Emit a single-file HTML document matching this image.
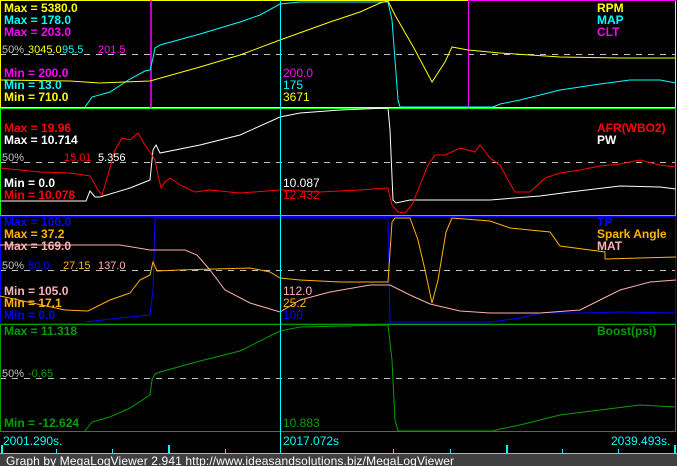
<!DOCTYPE html>
<html><head><meta charset="utf-8"><style>
html,body{margin:0;padding:0;background:#000;width:677px;height:466px;overflow:hidden}
svg{display:block}
text{font-family:"Liberation Sans",sans-serif;font-size:12px}
.b{font-weight:bold}
.s{font-size:11px}
</style></head><body>
<svg width="677" height="466" viewBox="0 0 677 466" xmlns="http://www.w3.org/2000/svg">
<rect width="677" height="466" fill="#000"/>
<g stroke="#c0c0c0" stroke-width="1" stroke-dasharray="6,6">
<line x1="0" y1="54.5" x2="676" y2="54.5"/>
<line x1="0" y1="162.5" x2="676" y2="162.5"/>
<line x1="0" y1="270.5" x2="676" y2="270.5"/>
<line x1="0" y1="378.5" x2="676" y2="378.5"/>
</g>
<rect x="0.5" y="0.5" width="675" height="107" fill="none" stroke="#ffff00"/>
<line x1="468" y1="0.5" x2="676" y2="0.5" stroke="#ff00ff"/>
<line x1="151" y1="0" x2="151" y2="108" stroke="#ff00ff" stroke-width="1.5"/>
<line x1="468.5" y1="0" x2="468.5" y2="108" stroke="#ff00ff"/>
<rect x="0.5" y="108.5" width="675" height="107" fill="none" stroke="#00ff00"/>
<rect x="0.5" y="216.5" width="675" height="107" fill="none" stroke="#0000ff"/>
<rect x="0.5" y="324.5" width="675" height="107" fill="none" stroke="#00a000"/>

<polyline fill="none" stroke="#00ffff" points="85,107 92,97 110,92 130,79 145,71 150,70 153,58 155,48 160,45 200,34 240,22 260,15 280,4 300,2 388,2 392,20 395,60 398,100 400,107 493,107 500,104 520,100 560,90 600,84 630,80 660,80 676,83"/>
<polyline fill="none" stroke="#ffff00" points="0,80 70,81 100,83 150,81 200,67 240,55 280,40 330,22 360,12 380,3 388,1 395,15 415,50 432,82 445,62 452,47 468,50 500,53 560,57 620,58 676,58"/>

<polyline fill="none" stroke="#ffffff" points="0,201 86,201 90,191 95,197 100,197 130,188 150,180 153,150 156,145 160,153 200,145 240,135 280,117 300,113 340,110 388,108 390,130 393,200 396,203 410,200 490,200 540,196 570,192 620,186 660,187 676,189"/>
<polyline fill="none" stroke="#ff0000" points="0,168 20,170 40,172 70,173 90,176 98,190 102,195 108,175 115,150 122,138 130,140 138,133 145,145 150,152 155,160 158,175 161,188 165,182 170,178 180,185 195,192 210,190 240,193 280,190 320,192 360,190 388,188 392,205 398,212 405,213 412,205 420,185 428,165 435,155 445,155 460,148 475,152 480,145 490,158 500,165 508,180 515,192 530,192 545,178 560,173 580,170 600,166 620,164 640,160 660,165 676,167"/>

<polyline fill="none" stroke="#0000ff" points="85,322 120,318 150,315 153,290 155,218 388,218 390,322 490,322 520,318 540,313 580,313 620,312 676,313"/>
<polyline fill="none" stroke="#ffb400" points="0,296 65,310 88,311 110,300 130,293 140,280 150,275 153,262 157,271 180,270 250,268 270,272 280,278 300,280 340,282 388,282 392,222 395,218 410,218 418,240 425,270 432,303 438,280 446,232 452,218 490,221 510,228 550,232 560,246 605,252 605,259 676,257"/>
<polyline fill="none" stroke="#ffb0b0" points="0,245 120,245 150,250 185,250 197,255 210,270 225,290 250,303 280,312 300,300 330,292 370,285 390,285 410,295 430,304 460,311 490,313 540,313 580,310 620,290 650,282 676,280"/>

<polyline fill="none" stroke="#00a000" points="85,431 92,422 110,417 130,408 150,395 152,380 155,374 160,372 200,361 240,351 280,331 300,327 388,325 392,360 395,420 398,431 493,431 500,429 520,425 560,415 600,410 640,405 676,407"/>

<line x1="280.5" y1="0" x2="280.5" y2="453" stroke="#00ffff"/>

<text class="b" x="4" y="12" fill="#ffff00">Max = 5380.0</text>
<text class="b" x="4" y="24" fill="#00ffff">Max = 178.0</text>
<text class="b" x="4" y="36" fill="#ff00ff">Max = 203.0</text>
<text class="s" x="2" y="53" fill="#c0c0c0">50%</text>
<text class="s" x="28" y="53" fill="#ffff00">3045.0</text>
<text class="s" x="62" y="53" fill="#00ffff">95.5</text>
<text class="s" x="98" y="53" fill="#ff00ff">201.5</text>
<text class="b" x="4" y="77" fill="#ff00ff">Min = 200.0</text>
<text class="b" x="4" y="89" fill="#00ffff">Min = 13.0</text>
<text class="b" x="4" y="101" fill="#ffff00">Min = 710.0</text>
<text x="283" y="77" fill="#ff00ff">200.0</text>
<text x="283" y="89" fill="#00ffff">175</text>
<text x="283" y="101" fill="#ffff00">3671</text>
<text class="b" x="597" y="12" fill="#ffff00">RPM</text>
<text class="b" x="597" y="24" fill="#00ffff">MAP</text>
<text class="b" x="597" y="36" fill="#ff00ff">CLT</text>

<text class="b" x="4" y="132" fill="#ff0000">Max = 19.96</text>
<text class="b" x="4" y="144" fill="#ffffff">Max = 10.714</text>
<text class="s" x="2" y="161" fill="#c0c0c0">50%</text>
<text class="s" x="64" y="161" fill="#ff0000">15.01</text>
<text class="s" x="98" y="161" fill="#ffffff">5.356</text>
<text class="b" x="4" y="187" fill="#ffffff">Min = 0.0</text>
<text class="b" x="4" y="199" fill="#ff0000">Min = 10.078</text>
<text x="283" y="187" fill="#ffffff">10.087</text>
<text x="283" y="199" fill="#ff0000">12.432</text>
<text class="b" x="597" y="132" fill="#ff0000">AFR(WBO2)</text>
<text class="b" x="597" y="144" fill="#ffffff">PW</text>

<text class="b" x="4" y="226" fill="#0000ff">Max = 100.0</text>
<text class="b" x="4" y="238" fill="#ffb400">Max = 37.2</text>
<text class="b" x="4" y="250" fill="#ffb0b0">Max = 169.0</text>
<text class="s" x="2" y="269" fill="#c0c0c0">50%</text>
<text class="s" x="28" y="269" fill="#0000ff">50.0</text>
<text class="s" x="63" y="269" fill="#ffb400">27.15</text>
<text class="s" x="98" y="269" fill="#ffb0b0">137.0</text>
<text class="b" x="4" y="295" fill="#ffb0b0">Min = 105.0</text>
<text class="b" x="4" y="307" fill="#ffb400">Min = 17.1</text>
<text class="b" x="4" y="319" fill="#0000ff">Min = 0.0</text>
<text x="283" y="295" fill="#ffb0b0">112.0</text>
<text x="283" y="307" fill="#ffb400">25.2</text>
<text x="283" y="319" fill="#0000ff">100</text>
<text class="b" x="597" y="226" fill="#0000ff">TP</text>
<text class="b" x="597" y="238" fill="#ffb400">Spark Angle</text>
<text class="b" x="597" y="250" fill="#ffb0b0">MAT</text>

<text class="b" x="4" y="335" fill="#00a000">Max = 11.318</text>
<text class="s" x="2" y="377" fill="#c0c0c0">50%</text>
<text class="s" x="28" y="377" fill="#00a000">-0.65</text>
<text class="b" x="4" y="427" fill="#00a000">Min = -12.624</text>
<text x="283" y="427" fill="#00a000">10.883</text>
<text class="b" x="597" y="335" fill="#00a000">Boost(psi)</text>

<text x="3" y="445" fill="#00ffff">2001.290s.</text>
<text x="283" y="445" fill="#00ffff">2017.072s</text>
<text x="611" y="445" fill="#00ffff">2039.493s.</text>
<line x1="0" y1="453.5" x2="677" y2="453.5" stroke="#00ffff"/>
<g stroke="#00ffff" stroke-width="2">
<line x1="2" y1="445" x2="2" y2="454"/>
<line x1="169" y1="445" x2="169" y2="454"/>
<line x1="507" y1="445" x2="507" y2="454"/>
<line x1="675" y1="445" x2="675" y2="454"/>
</g>
<g stroke="#00ffff" stroke-width="1">
<line x1="56.5" y1="449" x2="56.5" y2="454"/>
<line x1="112.5" y1="449" x2="112.5" y2="454"/>
<line x1="225.5" y1="449" x2="225.5" y2="454"/>
<line x1="393.5" y1="449" x2="393.5" y2="454"/>
<line x1="450.5" y1="449" x2="450.5" y2="454"/>
<line x1="562.5" y1="449" x2="562.5" y2="454"/>
<line x1="618.5" y1="449" x2="618.5" y2="454"/>
</g>
<rect x="0" y="454" width="677" height="12" fill="#404040"/>
<text x="6" y="465" fill="#ffffff" letter-spacing="0.12">Graph by MegaLogViewer 2.941 http://www.ideasandsolutions.biz/MegaLogViewer</text>
</svg>
</body></html>
